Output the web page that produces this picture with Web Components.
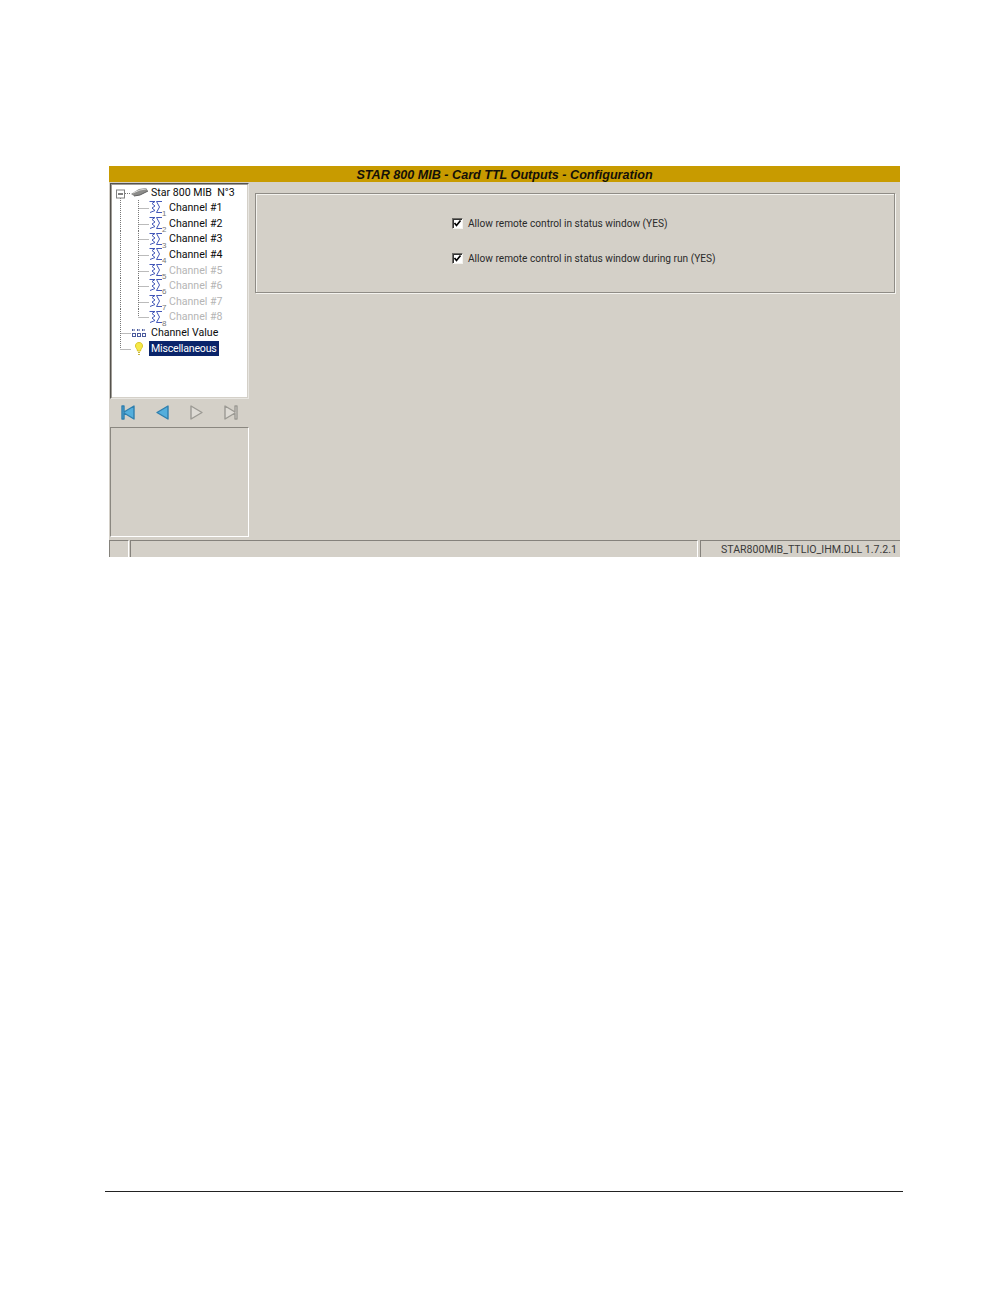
<!DOCTYPE html>
<html>
<head>
<meta charset="utf-8">
<title>STAR 800 MIB</title>
<style>
  html, body { margin: 0; padding: 0; background: #fff; }
</style>
</head>
<body>
<manual-page>
  <config-window heading="STAR 800 MIB - Card TTL Outputs - Configuration" version="STAR800MIB_TTLIO_IHM.DLL 1.7.2.1">
    <tree-row slot="tree" level="0" icon="chip" first>Star 800 MIB&nbsp; N°3</tree-row>
    <tree-row slot="tree" level="1" icon="chan" num="1">Channel #1</tree-row>
    <tree-row slot="tree" level="1" icon="chan" num="2">Channel #2</tree-row>
    <tree-row slot="tree" level="1" icon="chan" num="3">Channel #3</tree-row>
    <tree-row slot="tree" level="1" icon="chan" num="4">Channel #4</tree-row>
    <tree-row slot="tree" level="1" icon="chan" num="5" disabled>Channel #5</tree-row>
    <tree-row slot="tree" level="1" icon="chan" num="6" disabled>Channel #6</tree-row>
    <tree-row slot="tree" level="1" icon="chan" num="7" disabled>Channel #7</tree-row>
    <tree-row slot="tree" level="1" icon="chan" num="8" disabled last>Channel #8</tree-row>
    <tree-row slot="tree" level="0" icon="value">Channel Value</tree-row>
    <tree-row slot="tree" level="0" icon="bulb" selected last>Miscellaneous</tree-row>
    <check-line>Allow remote control in status window (YES)</check-line>
    <check-line>Allow remote control in status window during run (YES)</check-line>
  </config-window>
</manual-page>

<script>
class ManualPage extends HTMLElement {
  constructor() {
    super();
    this.attachShadow({ mode: 'open' }).innerHTML = `
      <style>
        :host { display: block; width: 1008px; height: 1296px; box-sizing: border-box; padding: 166px 0 0 109px; position: relative; overflow: hidden; }
        .rule { position: absolute; left: 105px; top: 1191px; width: 798px; height: 1px; background: #222; }
      </style>
      <slot></slot>
      <div class="rule"></div>`;
  }
}

class ConfigWindow extends HTMLElement {
  constructor() {
    super();
    this.attachShadow({ mode: 'open' }).innerHTML = `
      <style>
        :host { display: flex; flex-direction: column; width: 791px; height: 391px; background: #d4d0c8; font-family: Roboto, "Liberation Sans", sans-serif; }
        .title { height: 16px; background: #c89b00; text-align: center; font: italic bold 12.6px/18px "Liberation Sans", Arial, sans-serif; color: #141008; flex: none; }
        .main { flex: 1; display: flex; min-height: 0; }
        .left { width: 139px; margin-left: 1px; flex: none; display: flex; flex-direction: column; padding-top: 1px; }
        .tree { height: 216px; box-sizing: border-box; background: #fff; border: 1px solid #e8e6e1; border-top-color: #55524d; border-left-color: #55524d; box-shadow: inset 1px 1px 0 #a09d97, inset -1px -1px 0 #d4d0c8; padding-top: 0.6px; flex: none; position: relative; }
        .nav { height: 28px; flex: none; display: flex; }
        .info { height: 110px; box-sizing: border-box; flex: none; border: 1px solid; border-color: #8a8780 #fff #fff #8a8780; }
        .right { flex: 1; padding: 11px 5px 0 6px; }
        .group { height: 100px; box-sizing: border-box; border: 1px solid #8f8c86; box-shadow: 1px 1px 0 #f4f3ef, inset 1px 1px 0 #f4f3ef; display: flex; flex-direction: column; align-items: flex-start; padding: 21px 0 0 196px; gap: 19px; }
        .status { height: 17px; flex: none; display: flex; margin-top: 3px; font-size: 10.6px; color: #3a3a3a; }
        .status div { box-sizing: border-box; height: 17px; border-top: 1px solid #85827c; border-left: 1px solid #85827c; border-right: 1px solid #fff; }
        .s1 { width: 20px; margin-right: 1px; }
        .s2 { flex: 1; margin-right: 2px; }
        .s3 { width: 200px; text-align: right; padding-right: 3px; line-height: 17px; white-space: nowrap; border-right: 0 !important; }
      </style>
      <div class="title"></div>
      <div class="main">
        <div class="left">
          <div class="tree"><slot name="tree"></slot></div>
          <nav-bar class="nav"></nav-bar>
          <div class="info"></div>
        </div>
        <div class="right"><div class="group"><slot></slot></div></div>
      </div>
      <div class="status"><div class="s1"></div><div class="s2"></div><div class="s3"></div></div>`;
    this.shadowRoot.querySelector('.title').textContent = this.getAttribute('heading');
    this.shadowRoot.querySelector('.s3').textContent = this.getAttribute('version');
  }
}

const TREE_ICONS = {
  chip: `<svg width="18" height="12" viewBox="0 0 18 12"><path d="M0 7 L8 2 L15 1 L17 4 L9 8 L3 9 Z" fill="#8c8c8a"/><path d="M2 6 L9 3 L15 2" stroke="#d8d8d6" fill="none"/><path d="M3 9 L9 8 L17 4" stroke="#5f5f5f" fill="none"/></svg>`,
  chan: n => `<svg width="18" height="16" viewBox="0 0 18 16">
      <g fill="none" stroke="#4257b8" stroke-width="1"><path d="M0.5 1.5 H6 L3 3.5 L6 6 L3 8 L6 10.5 L1 12.5"/><path d="M13 1.5 H7.5 L10.5 7 L7.5 12.5 H13"/></g>
      <text x="13" y="15.5" font-family="Liberation Sans, sans-serif" font-size="8" fill="#777">${n}</text></svg>`,
  value: `<svg width="16" height="10" viewBox="0 0 16 10"><g fill="none" stroke="#4a5a9c" stroke-width="1"><path d="M1 2 H4 M6 2 H9 M11 2 H14" stroke-width="2" stroke-dasharray="1 .6"/><rect x="1.5" y="5.5" width="3" height="3"/><rect x="6.5" y="5.5" width="3" height="3"/><rect x="11.5" y="5.5" width="3" height="3"/></g></svg>`,
  bulb: `<svg width="8" height="14" viewBox="0 0 8 14"><path d="M4 .5 C6.5 .5 7.5 2 7.5 4 C7.5 6 5.5 7 5.5 9 H2.5 C2.5 7 .5 6 .5 4 C.5 2 1.5 .5 4 .5 Z" fill="#f6e948" stroke="#d9c52a"/><path d="M3 10.5 H5 M3 12.5 H5" stroke="#c4b440"/></svg>`
};

class TreeRow extends HTMLElement {
  constructor() {
    super();
    const level = +this.getAttribute('level');
    const icon = this.getAttribute('icon');
    const last = this.hasAttribute('last');
    const first = this.hasAttribute('first');
    const art = icon === 'chan' ? TREE_ICONS.chan(this.getAttribute('num')) : TREE_ICONS[icon];
    const dots = 'stroke="#777" stroke-dasharray="1 1" fill="none"';
    // dotted guides for this one row, row box is 15.6 high
    let guides = '';
    if (level === 1) {
      guides += `<path d="M9.5 0 V16" ${dots}/>`;
      guides += `<path d="M27.5 0 V${last ? 8 : 16} M27.5 8.5 H38" ${dots}/>`;
    } else if (first) {
      guides += `<path d="M9.5 13 V16 M14 8.5 H20" ${dots}/>`;
      guides += `<rect x="5.5" y="5" width="8" height="8" fill="#fff" stroke="#808080"/><path d="M7 9 H12" stroke="#000"/>`;
    } else {
      guides += `<path d="M9.5 0 V${last ? 8 : 16} M9.5 8.5 H20" ${dots}/>`;
    }
    this.attachShadow({ mode: 'open' }).innerHTML = `
      <style>
        :host { display: block; height: 15.6px; position: relative; font: 10.6px/15.6px Roboto, "Liberation Sans", sans-serif; color: ${this.hasAttribute('disabled') ? '#b5b5b5' : '#0c0c0c'}; white-space: pre; }
        .guides { position: absolute; left: 0; top: 0; }
        .icon { position: absolute; top: 0; height: 16.6px; display: flex; align-items: center; }
        .label { position: absolute; top: 0; left: ${level === 1 ? 58 : 40}px; }
        .label.sel { left: 38px; padding: 0 2px; background: #0a246a; color: #fff; letter-spacing: -0.2px; }
      </style>
      <svg class="guides" width="60" height="16" viewBox="0 0 60 16">${guides}</svg>
      <span class="icon" style="left:${level === 1 ? 38 : icon === 'bulb' ? 24 : 20}px">${art}</span>
      <span class="label ${this.hasAttribute('selected') ? 'sel' : ''}"><slot></slot></span>`;
  }
}

class NavBar extends HTMLElement {
  constructor() {
    super();
    const btn = (d, fill, edge) => `<svg width="20" height="20" viewBox="0 0 20 20"><path d="${d}" fill="${fill}" stroke="${edge}" stroke-width="1.4" stroke-linejoin="round"/></svg>`;
    this.attachShadow({ mode: 'open' }).innerHTML = `
      <style>
        :host { display: flex; align-items: center; height: 28px; padding-left: 9px; gap: 14px; box-sizing: border-box; }
        svg { flex: none; }
      </style>
      ${btn('M3 3 H5 V9 L15 3 V16 L5 10 V16 H3 Z', '#54aedc', '#2f7fae')}
      ${btn('M4 9.5 L15 3 V16 Z', '#54aedc', '#2f7fae')}
      ${btn('M15 9.5 L4 3 V16 Z', '#dedbd5', '#9c9a94')}
      ${btn('M16 3 H14 V9 L4 3 V16 L14 10 V16 H16 Z', '#dedbd5', '#9c9a94')}`;
  }
}

class CheckLine extends HTMLElement {
  constructor() {
    super();
    this.attachShadow({ mode: 'open' }).innerHTML = `
      <style>
        :host { display: flex; align-items: center; height: 16px; gap: 5px; font: 10.15px/16px Roboto, "Liberation Sans", sans-serif; color: #2a2a2a; white-space: nowrap; }
        .box { width: 11px; height: 11px; box-sizing: border-box; background: #fff; border: 1px solid; border-color: #6e6c68 #f4f3ef #f4f3ef #6e6c68; box-shadow: inset 1px 1px 0 #333; display: block; flex: none; }
        .text { margin-top: 2px; }
        svg { display: block; }
      </style>
      <span class="box"><svg width="9" height="9" viewBox="0 0 9 9"><path d="M1.5 4 L3.5 6.5 L7.5 1.5" fill="none" stroke="#000" stroke-width="1.7"/></svg></span>
      <span class="text"><slot></slot></span>`;
  }
}

customElements.define('manual-page', ManualPage);
customElements.define('config-window', ConfigWindow);
customElements.define('tree-row', TreeRow);
customElements.define('nav-bar', NavBar);
customElements.define('check-line', CheckLine);
</script>
</body>
</html>
